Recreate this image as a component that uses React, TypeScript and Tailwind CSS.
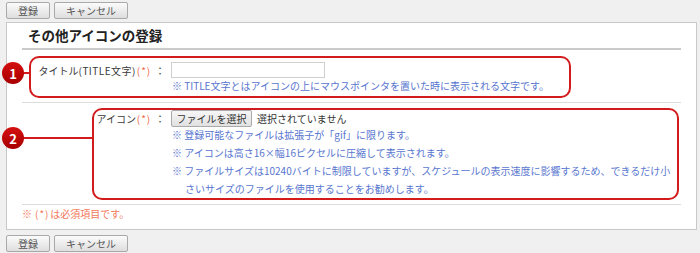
import React from 'react';

function GrayButton({ label, width }: { label: string; width: string }) {
  return (
    <button
      className={`${width} h-[17px] flex items-center justify-center rounded-[2px] border border-[#a9a9a9] bg-gradient-to-b from-[#fbfbfb] to-[#dedede] text-[10px] text-[#555] leading-none`}
    >
      {label}
    </button>
  );
}

function Required() {
  return <span className="inline-block w-[16px] text-center text-[#f2694a] tracking-[1px]">(*)</span>;
}

function Colon() {
  return <span className="inline-block w-[10px] ml-[3px] mr-[2px] text-center">：</span>;
}

export default function App() {
  const iconNotes = [
    '※ 登録可能なファイルは拡張子が「gif」に限ります。',
    '※ アイコンは高さ16×幅16ピクセルに圧縮して表示されます。',
  ];

  return (
    <div className="min-h-screen bg-[#f0f0f0] font-['Noto_Sans_CJK_JP','Noto_Sans',sans-serif] text-[10px] text-[#333]">
      {/* top buttons */}
      <div className="flex gap-[4px] pl-[6px] pt-[2px] h-[22px]">
        <GrayButton label="登録" width="w-[44px]" />
        <GrayButton label="キャンセル" width="w-[74px]" />
      </div>

      <div className="relative ml-[6px] mr-[3px] border border-[#c8c8c8] bg-white px-[15px] pb-[8px]">
        {/* heading */}
        <div className="h-[27px] border-b-2 border-[#cacaca] pl-[6px] flex items-center">
          <h2 className="text-[13.5px] font-bold text-[#222] leading-none">その他アイコンの登録</h2>
        </div>

        {/* row 1: title */}
        <div className="h-[53px] border-b border-[#dcdcdc] pt-[12px] flex">
          <div className="w-[145px] shrink-0 h-[16px] flex items-center justify-end text-[#3a3a3a]">
            タイトル<span className="tracking-[0.5px]">(TITLE文字)</span>
            <Required />
            <Colon />
          </div>
          <div className="ml-[4px]">
            <div className="w-[154px] h-[16px] border border-[#cfcfcf] bg-white" />
            <p className="leading-[16px] text-[#5876cf] whitespace-nowrap pl-[1px]">
              ※ TITLE文字とはアイコンの上にマウスポインタを置いた時に表示される文字です。
            </p>
          </div>
        </div>

        {/* row 2: icon */}
        <div className="h-[102px] border-b border-[#dcdcdc] pt-[7px] flex">
          <div className="w-[145px] shrink-0 h-[17px] flex items-center justify-end text-[#3a3a3a]">
            アイコン
            <Required />
            <Colon />
          </div>
          <div className="ml-[4px]">
            <div className="flex items-center gap-[5px] h-[17px]">
              <button className="w-[81px] h-[17px] flex items-center justify-center rounded-[2px] border border-[#a9a9a9] bg-gradient-to-b from-[#f7f7f7] to-[#e1e1e1] text-[10px] text-[#333] leading-none">
                ファイルを選択
              </button>
              <span className="text-[#333]">選択されていません</span>
            </div>
            <div className="-mt-[1px] leading-[18px] text-[#5876cf] whitespace-nowrap pl-[1px]">
              {iconNotes.map((n) => (
                <p key={n}>{n}</p>
              ))}
              <p className="pl-[13px] indent-[-13px]">
                ※ ファイルサイズは10240バイトに制限していますが、スケジュールの表示速度に影響するため、できるだけ小
                <br />
                さいサイズのファイルを使用することをお勧めします。
              </p>
            </div>
          </div>
        </div>

        {/* required note */}
        <p className="h-[15px] leading-[15px] mt-[1px] text-[#f2775a]">
          ※ <span className="inline-block w-[16px] text-center tracking-[1px]">(*)</span>は必須項目です。
        </p>

        {/* annotation overlays */}
        <div className="absolute left-[22px] top-[33px] w-[542px] h-[42px] rounded-[10px] border-2 border-[#d31b1b] pointer-events-none" />
        <div className="absolute left-[6px] top-[49px] w-[17px] h-[2px] bg-[#d31b1b]" />
        <div className="absolute left-[-5px] top-[39px] w-[22px] h-[22px] rounded-full bg-gradient-to-b from-[#d41010] to-[#a80000] flex items-center justify-center text-white font-bold text-[13px] leading-none">
          1
        </div>

        <div className="absolute left-[85px] top-[85px] w-[587px] h-[92px] rounded-[10px] border-2 border-[#d31b1b] pointer-events-none" />
        <div className="absolute left-[6px] top-[114px] w-[80px] h-[2px] bg-[#d31b1b]" />
        <div className="absolute left-[-5px] top-[104px] w-[22px] h-[22px] rounded-full bg-gradient-to-b from-[#d41010] to-[#a80000] flex items-center justify-center text-white font-bold text-[13px] leading-none">
          2
        </div>
      </div>

      {/* bottom buttons */}
      <div className="flex gap-[4px] pl-[6px] pt-[5px]">
        <GrayButton label="登録" width="w-[44px]" />
        <GrayButton label="キャンセル" width="w-[74px]" />
      </div>
    </div>
  );
}
